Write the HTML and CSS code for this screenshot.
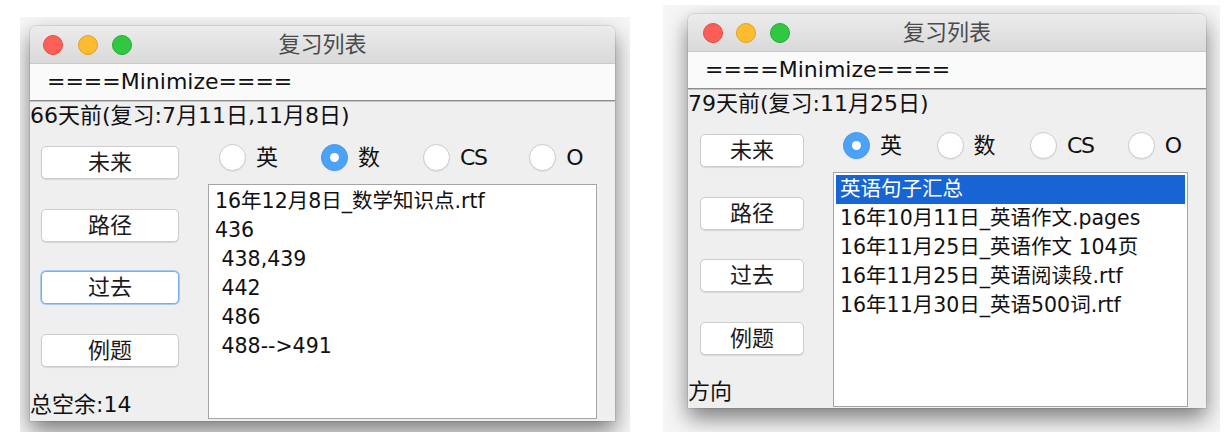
FILE: index.html
```html
<!DOCTYPE html>
<html lang="zh">
<head>
<meta charset="utf-8">
<title>复习列表</title>
<link rel="stylesheet" href="styles.css">
</head>
<body>
<div class="shot shot-a">
  <div class="window win-a">
    <div class="titlebar">
      <div class="lights"><span class="light red"></span><span class="light yellow"></span><span class="light green"></span></div>
      <div class="title">复习列表</div>
      <div></div>
    </div>
    <div class="menubar">====Minimize====</div>
    <div class="content">
      <div class="status">66天前(复习:7月11日,11月8日)</div>
      <div class="main">
        <div class="leftcol">
          <div class="buttons">
            <div class="btn">未来</div>
            <div class="btn">路径</div>
            <div class="btn focus">过去</div>
            <div class="btn">例题</div>
          </div>
          <div class="footnote">总空余:14</div>
        </div>
        <div class="rightcol">
          <div class="radios">
            <div class="radio"><span class="dot"></span><span class="rlabel">英</span></div>
            <div class="radio"><span class="dot on"></span><span class="rlabel">数</span></div>
            <div class="radio"><span class="dot"></span><span class="rlabel latin">CS</span></div>
            <div class="radio"><span class="dot"></span><span class="rlabel latin">O</span></div>
          </div>
          <div class="list">
            <div class="item">16年12月8日_数学知识点.rtf</div>
            <div class="item">436</div>
            <div class="item"> 438,439</div>
            <div class="item"> 442</div>
            <div class="item"> 486</div>
            <div class="item"> 488--&gt;491</div>
          </div>
        </div>
      </div>
    </div>
  </div>
</div>
<div class="shot shot-b">
  <div class="window win-b">
    <div class="titlebar">
      <div class="lights"><span class="light red"></span><span class="light yellow"></span><span class="light green"></span></div>
      <div class="title">复习列表</div>
      <div></div>
    </div>
    <div class="menubar">====Minimize====</div>
    <div class="content">
      <div class="status">79天前(复习:11月25日)</div>
      <div class="main">
        <div class="leftcol">
          <div class="buttons">
            <div class="btn">未来</div>
            <div class="btn">路径</div>
            <div class="btn">过去</div>
            <div class="btn">例题</div>
          </div>
          <div class="footnote">方向</div>
        </div>
        <div class="rightcol">
          <div class="radios">
            <div class="radio"><span class="dot on"></span><span class="rlabel">英</span></div>
            <div class="radio"><span class="dot"></span><span class="rlabel">数</span></div>
            <div class="radio"><span class="dot"></span><span class="rlabel latin">CS</span></div>
            <div class="radio"><span class="dot"></span><span class="rlabel latin">O</span></div>
          </div>
          <div class="list">
            <div class="item selected">英语句子汇总</div>
            <div class="item">16年10月11日_英语作文.pages</div>
            <div class="item">16年11月25日_英语作文 104页</div>
            <div class="item">16年11月25日_英语阅读段.rtf</div>
            <div class="item">16年11月30日_英语500词.rtf</div>
          </div>
        </div>
      </div>
    </div>
  </div>
</div>
</body>
</html>
```

FILE: styles.css
```css
html, body {
  margin: 0;
  padding: 0;
  background: #ffffff;
}
body {
  width: 1230px;
  height: 436px;
  overflow: hidden;
  display: flex;
  align-items: flex-start;
  font-family: "DejaVu Sans", "Noto Sans CJK SC", sans-serif;
  color: #111111;
}
.shot {
  overflow: hidden;
  background: #f6f6f6;
  box-sizing: border-box;
}
.shot-a {
  margin-left: 20px;
  margin-top: 17px;
  width: 610px;
  height: 415px;
  padding: 9px 0 0 10px;
}
.shot-b {
  margin-left: 33px;
  margin-top: 5px;
  width: 557px;
  height: 427px;
  padding: 9px 0 0 25px;
}
.window {
  background: #efefef;
  border-radius: 6px 6px 0 0;
  box-shadow: 0 10px 22px rgba(0, 0, 0, 0.5), 0 0 0 1px rgba(0, 0, 0, 0.08);
  display: flex;
  flex-direction: column;
  overflow: hidden;
}
.win-a {
  width: 585px;
  height: 395px;
}
.win-b {
  width: 518px;
  height: 394px;
}
.titlebar {
  height: 37px;
  flex: none;
  display: grid;
  grid-template-columns: 1fr auto 1fr;
  align-items: center;
  background: linear-gradient(#ececec, #d9d9d9);
  border-bottom: 1px solid #c9c9c9;
}
.lights {
  display: flex;
  gap: 14.5px;
  padding-left: 13px;
}
.win-b .lights {
  padding-left: 14.5px;
  gap: 13.5px;
}
.light {
  width: 20px;
  height: 20px;
  border-radius: 50%;
  box-sizing: border-box;
}
.red { background: #fc5f57; border: 1px solid #e5493f; }
.yellow { background: #fdbb2f; border: 1px solid #e4a225; }
.green { background: #2fc840; border: 1px solid #22ab31; }
.title {
  font-size: 22px;
  line-height: 37px;
  color: #4b4b4b;
}
.menubar {
  height: 37px;
  flex: none;
  box-sizing: border-box;
  background: #fafafa;
  border-bottom: 1px solid #8d8d8d;
  box-shadow: 0 1px 0 #c4c4c4;
  padding-left: 17px;
  font-size: 22px;
  line-height: 36px;
  color: #111;
}
.content {
  flex: 1;
  display: flex;
  flex-direction: column;
  min-height: 0;
}
.status {
  height: 30px;
  line-height: 30px;
  font-size: 22px;
  white-space: nowrap;
}
.main {
  flex: 1;
  display: flex;
  min-height: 0;
}
.leftcol {
  display: flex;
  flex-direction: column;
  justify-content: space-between;
}
.win-a .leftcol { width: 178px; }
.win-b .leftcol { width: 145px; }
.buttons {
  display: flex;
  flex-direction: column;
  gap: 29.5px;
  padding-top: 15px;
}
.win-a .buttons { padding-left: 11px; }
.win-b .buttons { padding-left: 12px; }
.btn {
  height: 33px;
  box-sizing: border-box;
  background: #ffffff;
  border: 1px solid #cdcdcd;
  border-radius: 5px;
  box-shadow: 0 1px 1px rgba(0, 0, 0, 0.1);
  font-size: 22px;
  line-height: 31px;
  text-align: center;
  color: #1a1a1a;
}
.win-a .btn { width: 138px; }
.win-b .btn { width: 104px; }
.btn.focus {
  border-color: #79aeea;
  box-shadow: 0 0 0 1px #a8cbf2;
}
.footnote {
  height: 30px;
  line-height: 30px;
  font-size: 22px;
  padding-bottom: 1px;
  white-space: nowrap;
}
.rightcol {
  flex: 1;
  display: flex;
  flex-direction: column;
  margin-right: 18px;
}
.radios {
  height: 53px;
  flex: none;
  display: flex;
  align-items: center;
}
.win-a .radios { gap: 43px; padding-left: 11px; }
.win-b .radios { gap: 34.5px; padding-left: 10px; }
.radio {
  display: flex;
  align-items: center;
}
.dot {
  width: 27px;
  height: 27px;
  box-sizing: border-box;
  border-radius: 50%;
  background: #ffffff;
  border: 1px solid #cbcbcb;
  box-shadow: 0 1px 1px rgba(0, 0, 0, 0.06);
  margin-right: 10px;
  display: flex;
  align-items: center;
  justify-content: center;
}
.dot.on {
  background: #4ba2f7;
  border-color: #3f97ef;
}
.dot.on::after {
  content: "";
  width: 9px;
  height: 9px;
  border-radius: 50%;
  background: #ffffff;
}
.rlabel {
  font-size: 22px;
  line-height: 30px;
}
.rlabel.latin {
  letter-spacing: -1.5px;
}
.list {
  height: 235px;
  flex: none;
  box-sizing: border-box;
  background: #ffffff;
  border: 1px solid #a5a5a5;
  padding: 2px;
  font-size: 20.5px;
}
.item {
  height: 29px;
  line-height: 29px;
  padding-left: 4px;
  white-space: pre;
  color: #111;
}
.item.selected {
  background: #1764d4;
  color: #ffffff;
}
```
